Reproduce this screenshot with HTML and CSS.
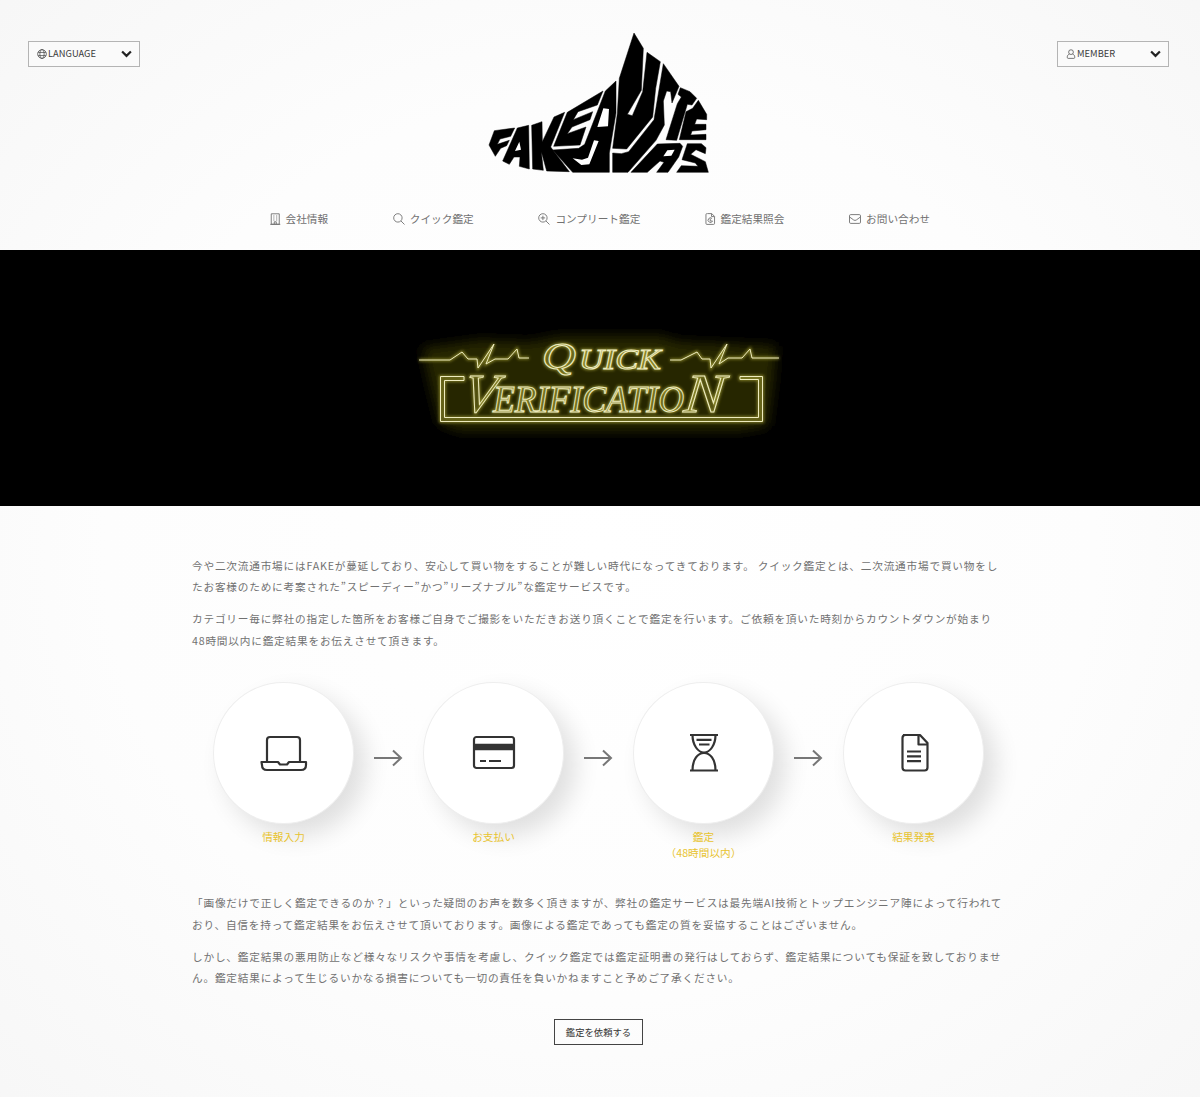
FILE: index.html
```html
<!DOCTYPE html>
<html lang="ja">
<head>
<meta charset="utf-8">
<title>クイック鑑定</title>
<link rel="stylesheet" href="styles.css">
</head>
<body>
<header class="header">
  <div class="topbar">
    <button class="picker">
      <svg class="picker-icon" viewBox="0 0 16 16"><circle cx="8" cy="8" r="7"/><ellipse cx="8" cy="8" rx="3.4" ry="7"/><path d="M1.8 5.5h12.4M1.8 10.5h12.4"/></svg>
      <span>LANGUAGE</span>
      <svg class="chevron" viewBox="0 0 10 7"><path d="M1 1.2l4 4 4-4"/></svg>
    </button>
    <svg class="logo" viewBox="0 0 720 465" role="img" aria-label="FAKE BUSTERS">
      <path class="ink" d="M462 24L490 70L484 196L442 268L457 272L488 200L501 82L541 110L527 190L518 276L440 372L398 370L412 265L418 160Z"/>
      <path class="ink" d="M550 116L597 184L576 234L572 200L560 198L550 228L553 300L528 346L444 442H398V384L424 386L446 380L522 284Z"/>
      <path class="ink" d="M601 188L630 200L650 220L636 240L622 238L590 346L558 344L592 236L604 216L594 208Z"/>
      <path class="ink" d="M655 226L680 268V284L650 282L644 298H678V314L636 318L632 330L678 328V344L598 344L618 260L638 250Z"/>
      <path class="ink" d="M532 357L600 355L608 364L596 396L564 442H530L552 412L540 408L502 442H453Z"/>
      <path class="paper" d="M562 376L584 374L574 392L550 394Z"/>
      <path class="ink" d="M622 356H664L678 368L676 386L648 374L632 388L676 410L685 442H590L604 422L654 424L646 414L606 404Z"/>
      <path class="ink" d="M408 168L408 264L388 384V442H278L218 375L296 370L314 358L376 198Z"/>
      <path class="paper" d="M370 250L387 252L384 304L352 306ZM342 346L356 348L328 418L304 420L278 400L306 404L324 398Z"/>
      <path class="ink" d="M369 198L352 240L294 260L280 284L338 260L330 284L276 306L262 326L318 306L300 360L221 364L262 262Z"/>
      <path class="ink" d="M254 262L212 366L268 440L200 438L184 380L190 436L158 432L155 301L186 290L187 350L222 276Z"/>
      <path class="ink" d="M146 301L148 432L118 424L120 396H102L88 418L68 408L112 309Z"/>
      <path class="paper" d="M118 350L123 374L105 378Z"/>
      <path class="ink" d="M43 317L104 309L92 334L60 342L52 358L88 346L80 362L62 370L46 394L27 360Z"/>
    </svg>
    <button class="picker">
      <svg class="picker-icon" viewBox="0 0 16 16"><circle cx="8" cy="5" r="3.8"/><path d="M5.2 8.5C3 9 2 10.500 2 13.500c0 1 .6 1.500 1.500 1.500h9c.9 0 1.500-.5 1.500-1.500 0-3-1-4.500-3.200-5"/></svg>
      <span>MEMBER</span>
      <svg class="chevron" viewBox="0 0 10 7"><path d="M1 1.2l4 4 4-4"/></svg>
    </button>
  </div>
  <nav class="nav">
    <a><svg class="nav-icon narrow" viewBox="0 0 10 12"><path d="M1 .8h8v10.400H1zM0 11.400h10M3 3h1.200M5.800 3H7M3 5h1.200M5.800 5H7M3 7h1.200M5.800 7H7M4 11V8.800h2V11"/></svg>会社情報</a>
    <a><svg class="nav-icon" viewBox="0 0 12 12"><circle cx="4.900" cy="4.900" r="4.200"/><path d="M8 8l3.500 3.500"/></svg>クイック鑑定</a>
    <a><svg class="nav-icon" viewBox="0 0 12 12"><circle cx="4.900" cy="4.900" r="4.200"/><path d="M8 8l3.500 3.500M2.700 4.900h4.400M4.900 2.700v4.400"/></svg>コンプリート鑑定</a>
    <a><svg class="nav-icon narrow" viewBox="0 0 10 12"><path d="M2 .6h4.500L9.300 3.400v7q0 1-1 1H1.700q-1 0-1-1V1.600q0-1 1-1M6.300.8v2.800H9M6.800 5.500A2.300 2.300 0 1 0 7.300 8H5V5.500"/></svg>鑑定結果照会</a>
    <a><svg class="nav-icon" viewBox="0 0 12 12"><rect x=".5" y="1.600" width="11" height="8.800" rx="1.200"/><path d="M.6 4l4.100 3q1.300.9 2.600 0l4.100-3"/></svg>お問い合わせ</a>
  </nav>
</header>

<section class="hero">
  <svg class="neon" viewBox="0 0 400 140" role="img" aria-label="Quick Verification">
    <defs>
      <filter id="halo" x="-20%" y="-30%" width="140%" height="160%"><feGaussianBlur stdDeviation="6"/></filter>
      <filter id="glow" x="-10%" y="-20%" width="120%" height="140%"><feGaussianBlur stdDeviation="1.800"/></filter>
      <g id="sign">
        <path d="M19 46H50L62 38L68 45H77L78 54L94 30L86 50L95 45H108L117 35L119 44H129"/>
        <path d="M270 46H281L297 38L302 45H310L311 54L327 30L319 50L328 44H342L350 35L352 44H379"/>
        <path d="M64 62.500H40.500V107.500H362.500V62.500H340V65.500H358.500V103.500H44.500V66.500H64Z"/>
        <g class="neon-text">
          <text x="142" y="55" font-size="38" textLength="34" lengthAdjust="spacingAndGlyphs">Q</text>
          <text x="179" y="55" font-size="29" textLength="82" lengthAdjust="spacingAndGlyphs">UICK</text>
          <text transform="translate(61 98) skewX(-10)" font-size="55" textLength="33" lengthAdjust="spacingAndGlyphs">V</text>
          <text x="93" y="98" font-size="38" textLength="191" lengthAdjust="spacingAndGlyphs">ERIFICATIO</text>
          <text transform="translate(283 98) skewX(-6)" font-size="55" textLength="40" lengthAdjust="spacingAndGlyphs">N</text>
        </g>
      </g>
    </defs>
    <path class="halo" filter="url(#halo)" d="M22 34L80 26L130 28L160 22L260 22L280 28L376 32L374 64L368 112L340 117H60L40 110L30 70Z"/>
    <use class="glow" href="#sign" filter="url(#glow)"/>
    <use class="tube" href="#sign"/>
  </svg>
</section>

<main class="content">
  <p>今や二次流通市場にはFAKEが蔓延しており、安心して買い物をすることが難しい時代になってきております。 クイック鑑定とは、二次流通市場で買い物をしたお客様のために考案された”スピーディー”かつ”リーズナブル”な鑑定サービスです。</p>
  <p>カテゴリー毎に弊社の指定した箇所をお客様ご自身でご撮影をいただきお送り頂くことで鑑定を行います。ご依頼を頂いた時刻からカウントダウンが始まり<wbr><span class="unbroken">48時間</span>以内に鑑定結果をお伝えさせて頂きます。</p>

  <div class="steps">
    <div class="step">
      <div class="disc"><svg viewBox="0 0 48 48"><path d="M7 31V10q0-3 3-3h27q3 0 3 3v21M1.500 32H18l2 2.500h7L29 32h17v3q0 5-5 5H7q-5 0-5-5z"/></svg></div>
      <div class="caption">情報入力</div>
    </div>
    <svg class="arrow" viewBox="0 0 28 18"><path d="M0 9h27M19 1.500L27 9l-8 7.500"/></svg>
    <div class="step">
      <div class="disc"><svg viewBox="0 0 48 48"><rect x="4" y="7" width="40" height="31" rx="2.500"/><path d="M10 31h6M19 31h12"/><path class="band" d="M4 17h40"/></svg></div>
      <div class="caption">お支払い</div>
    </div>
    <svg class="arrow" viewBox="0 0 28 18"><path d="M0 9h27M19 1.500L27 9l-8 7.500"/></svg>
    <div class="step">
      <div class="disc"><svg viewBox="0 0 48 48"><path d="M10 5h28M10 40.500h28M12.500 5C12.500 15 18 22.500 24 22.500S35.500 15 35.500 5M12.500 40.500C12.500 29 18 23 24 23S35.500 29 35.500 40.500M16.500 9.800h15M19 14.500h10.500"/></svg></div>
      <div class="caption">鑑定<br>（48時間以内）</div>
    </div>
    <svg class="arrow" viewBox="0 0 28 18"><path d="M0 9h27M19 1.500L27 9l-8 7.500"/></svg>
    <div class="step">
      <div class="disc"><svg viewBox="0 0 48 48"><path d="M13 5h17l7.500 8v24.500q0 3-3 3h-19q-3 0-3-3V8q0-3 3-3M28.500 5v9.500H37M17 21.500h14M17 26.300h14M17 31.100h14"/></svg></div>
      <div class="caption">結果発表</div>
    </div>
  </div>

  <p>「画像だけで正しく鑑定できるのか？」といった疑問のお声を数多く頂きますが、弊社の鑑定サービスは最先端AI技術とトップエンジニア陣によって行われており、自信を持って鑑定結果をお伝えさせて頂いております。画像による鑑定であっても鑑定の質を妥協することはございません。</p>
  <p>しかし、鑑定結果の悪用防止など様々なリスクや事情を考慮し、クイック鑑定では鑑定証明書の発行はしておらず、鑑定結果についても保証を致しておりません。鑑定結果によって生じるいかなる損害についても一切の責任を負いかねますこと予めご了承ください。</p>
  <a class="request">鑑定を依頼する</a>
</main>
</body>
</html>
```
FILE: styles.css
```css
* { box-sizing: border-box; }
body {
  margin: 0;
  min-height: 1097px;
  font-family: "Noto Sans CJK JP", "Noto Sans", sans-serif;
  font-size: 10.67px;
  color: #717171;
  background: radial-gradient(ellipse 75% 75% at 50% 50%, #fff 0%, #fdfdfd 55%, #f6f6f6 100%);
}
svg { fill: none; stroke: currentColor; display: block; overflow: visible; }

.header { height: 250px; }
.topbar {
  display: flex;
  justify-content: space-between;
  align-items: flex-start;
  padding: 25px 31px 0 28px;
  height: 180px;
}
.picker {
  display: flex;
  align-items: center;
  gap: 1px;
  width: 112px;
  height: 26px;
  margin: 16px 0 0;
  padding: 0 7px 0 8px;
  border: 1px solid #b4b4b4;
  background: #fafafa;
  color: #3c3c3c;
  font: 9.33px/1 "Noto Sans CJK JP", "Noto Sans", sans-serif;
}
.picker-icon { width: 10px; height: 10px; stroke-width: 1.1; }
.chevron { width: 11px; height: 8px; margin-left: auto; stroke: #222; stroke-width: 2; }
.logo { width: 240px; height: 155px; margin-left: 3px; }
.ink { fill: #000; stroke: #000; stroke-width: 1.500; }
.paper { fill: #fff; stroke: none; }

.nav {
  display: flex;
  justify-content: center;
  gap: 64.670px;
  height: 77px;
  line-height: 77px;
}
.nav a { display: flex; align-items: center; gap: 5px; height: 77px; }
.nav-icon { width: 12px; height: 12px; stroke-width: .9; }
.nav-icon.narrow { width: 10.500px; }

.hero { height: 256px; background: #000; display: flex; justify-content: center; padding-top: 64px; }
.neon { width: 400px; height: 140px; }
.neon-text { font-family: "Liberation Serif", serif; font-style: italic; }
.halo { fill: #272502; stroke: none; }
.glow { stroke: #8c8829; stroke-width: 2.600; }
.tube { stroke: #eeecc0; stroke-width: 1; }

.content { width: 816px; margin: 0 auto; padding-top: 49px; }
.content p { margin: 0 3px 10.670px 0; line-height: 21.330px; letter-spacing: .79px; }
.unbroken { white-space: nowrap; }

.steps { display: flex; height: 230.500px; padding: 20px 24px 0 21px; margin-top: 11px; }
.step { width: 142px; flex: none; }
.disc {
  width: 141px;
  height: 142px;
  border: 1px solid #eee;
  border-radius: 50%;
  background: #fff;
  box-shadow: 12px 12px 24px rgba(0, 0, 0, .12);
  display: flex;
  align-items: center;
  justify-content: center;
}
.disc svg { width: 48px; height: 48px; margin-top: 2px; color: #333; stroke-width: 2.200; stroke-linejoin: round; }
.band { stroke-width: 6.500; }
.caption { margin: 5px -9px 0 -10px; text-align: center; line-height: 16px; color: #e8c32e; }
.arrow { width: 28px; height: 18px; margin: 67.500px 21px 0 19px; flex: none; color: #777; stroke-width: 2; }
.request {
  display: block;
  width: 89px;
  height: 26px;
  margin: 31px 365px 0 362px;
  border: 1px solid #444;
  text-align: center;
  line-height: 24px;
  font-size: 9.330px;
  color: #333;
}
```
